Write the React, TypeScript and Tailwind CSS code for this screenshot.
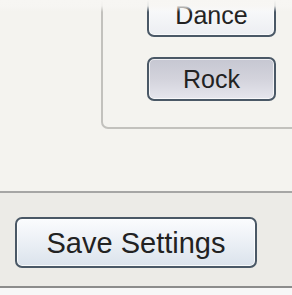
import React from 'react';

const font = { fontFamily: '"Liberation Sans", Arial, sans-serif' };

function GenreButton({ label, pressed = false }: { label: string; pressed?: boolean }) {
  // pressed = the grey, held-down look of the Rock button
  const fill = pressed
    ? 'bg-gradient-to-b from-[#c6c7d2] via-[#d3d3dc] to-[#e6e6ed]'
    : 'bg-gradient-to-b from-[#ffffff] to-[#eceef2]';
  return (
    <button
      className={`w-[129px] h-[44px] rounded-[7px] border-2 border-[#4a5866] ${fill} shadow-[inset_0_0_0_1px_rgba(255,255,255,0.7)] text-[25px] leading-none text-[#222222] flex items-center justify-center pt-[1px]`}
      style={font}
    >
      {label}
    </button>
  );
}

export default function App() {
  return (
    <div className="relative w-[292px] h-[295px] flex flex-col overflow-hidden bg-[#f4f3ef]" style={font}>
      {/* upper panel with the group box */}
      <div className="h-[191px] shrink-0 overflow-hidden">
        <div className="ml-[101px] mt-[-20px] w-[230px] h-[149px] rounded-[7px] border-2 border-[#c2c1bd] pl-[44px] pt-[11px] flex flex-col gap-[20px]">
          <GenreButton label="Dance" />
          <GenreButton label="Rock" pressed />
        </div>
      </div>

      {/* separator */}
      <div className="h-[2px] shrink-0 bg-[#a6a6a5]" />

      {/* footer */}
      <div className="h-[93px] shrink-0 bg-[#ecebe7] pl-[15px] pt-[24px]">
        <button
          className="w-[242px] h-[51px] rounded-[7px] border-2 border-[#4a5866] bg-gradient-to-b from-[#fbfcfe] to-[#dbe3ec] shadow-[inset_0_0_0_1px_rgba(255,255,255,0.8)] text-[29px] leading-none text-[#222222] flex items-center justify-center pt-[1px]"
          style={font}
        >
          Save Settings
        </button>
      </div>

      <div className="h-[2px] shrink-0 bg-[#8c8c8c]" />
      <div className="flex-1 bg-[#f7f7f7]" />

      {/* washed-out top edge of the capture */}
      <div className="pointer-events-none absolute left-0 top-0 w-full h-[12px] bg-gradient-to-b from-[#f7f6f3] via-[#f7f6f3]/90 to-transparent" />
    </div>
  );
}
